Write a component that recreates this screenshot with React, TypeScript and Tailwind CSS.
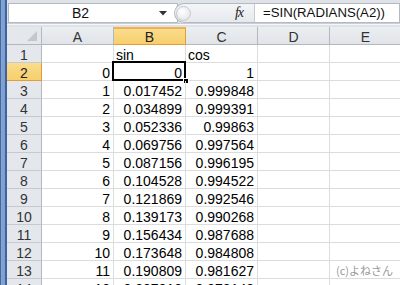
import React from "react";

const sinVals = ["0", "0.017452", "0.034899", "0.052336", "0.069756", "0.087156", "0.104528", "0.121869", "0.139173", "0.156434", "0.173648", "0.190809", "0.207912"];
const cosVals = ["1", "0.999848", "0.999391", "0.99863", "0.997564", "0.996195", "0.994522", "0.992546", "0.990268", "0.987688", "0.984808", "0.981627", "0.978148"];

type Row = { n: number; a: string; b: string; c: string; bLeft?: boolean };

const rows: Row[] = [
  { n: 1, a: "", b: "sin", c: "cos", bLeft: true },
  ...sinVals.map((s, i) => ({ n: i + 2, a: String(i), b: s, c: cosVals[i] })),
];

const cellBase =
  "shrink-0 w-[72px] h-[18px] border-b border-r border-[#dadcdd] flex items-end leading-[14px] overflow-hidden whitespace-nowrap";

export default function App() {
  return (
    <div
      className="w-[400px] h-[285px] overflow-hidden flex bg-white text-[14px] text-black"
      style={{ fontFamily: '"Liberation Sans", Arial, sans-serif' }}
    >
      {/* window frame strip */}
      <div className="w-[7px] shrink-0 bg-[linear-gradient(to_right,#48679c_0px,#48679c_1px,#83a5d7_1px,#7a9ed2_5px,#3f63a1_5px,#3f63a1_7px)]" />

      <div className="flex flex-col min-w-0 flex-1">
        {/* formula bar */}
        <div className="h-[27px] shrink-0 flex flex-col bg-[#dfe3e8]">
          <div className="h-[23px] flex items-start pt-[3px]">
            <div className="ml-[1px] w-[170px] h-[20px] shrink-0 bg-white border border-[#b3bac3] flex items-center">
              <div className="flex-1 text-center leading-[18px] pr-[3px] text-[#111]">B2</div>
              <div className="w-[22px] flex justify-center pr-[6px]">
                <svg width="8" height="5" viewBox="0 0 8 5">
                  <polygon points="0,0 8,0 4,4.5" fill="#333" />
                </svg>
              </div>
            </div>
            <div className="-ml-[4px] relative h-[20px] w-[80px] shrink-0 rounded-l-[10px] border border-r-0 border-[#b3bac3] bg-[linear-gradient(to_bottom,#f4f5f7,#e6e9ed)] flex items-center">
              <div className="ml-[1px] w-[15px] h-[15px] rounded-full border border-[#c4c9cf] bg-[radial-gradient(circle_at_40%_35%,#ffffff,#dde0e4)]" />
              <div className="ml-auto mr-[11px] flex items-center">
                <span
                  className="italic text-[14px] leading-[14px] text-[#222] tracking-[-1px]"
                  style={{ fontFamily: '"Liberation Serif", "Times New Roman", serif' }}
                >
                  fx
                </span>
              </div>
            </div>
            <div className="flex-1 h-[20px] bg-white border border-l-[#c6cbd1] border-[#b3bac3] flex items-center pl-[8px] leading-[18px] text-[#111] whitespace-nowrap overflow-hidden text-[13.2px]">
              =SIN(RADIANS(A2))
            </div>
          </div>
          <div className="h-[1px] bg-[#c9ced5]" />
          <div className="h-[1px] bg-[#f6f7f8]" />
          <div className="h-[2px] bg-[#dfe3e8]" />
        </div>

        {/* column headers */}
        <div className="flex h-[18px] shrink-0">
          <div className="shrink-0 w-[35px] h-[18px] bg-[#e4e7eb] border-b border-r border-[#b1b8c0] relative">
            <svg className="absolute right-[4px] bottom-[3px]" width="10" height="10" viewBox="0 0 10 10">
              <polygon points="10,0 10,10 0,10" fill="#c3c8ce" />
            </svg>
          </div>
          {["A", "B", "C", "D", "E"].map((l) => (
            <div
              key={l}
              className={
                l === "B"
                  ? "shrink-0 w-[72px] h-[18px] border-b border-r border-[#e39c37] border-t-[2px] border-t-[#f2b24b] bg-[linear-gradient(to_bottom,#f9dc8e,#f7cf6c)] flex items-end justify-center leading-[14px] text-[#222]"
                  : "shrink-0 w-[72px] h-[18px] border-b border-r border-[#b1b8c0] bg-[linear-gradient(to_bottom,#eceff2,#e0e3e7)] flex items-end justify-center leading-[14px] text-[#333]"
              }
            >
              {l}
            </div>
          ))}
        </div>

        {/* rows */}
        {rows.map((r) => (
          <div key={r.n} className="flex h-[18px] shrink-0">
            <div
              className={
                r.n === 2
                  ? "shrink-0 w-[35px] h-[18px] border-b border-r border-[#e39c37] bg-[linear-gradient(to_bottom,#f9dc8e,#f7cf6c)] flex items-end justify-center leading-[14px] text-[#222]"
                  : "shrink-0 w-[35px] h-[18px] border-b border-[#c5cad0] border-r border-r-[#b1b8c0] bg-[#e4e7eb] flex items-end justify-center leading-[14px] text-[#333]"
              }
            >
              {r.n}
            </div>
            <div className={cellBase + " justify-end pr-[3px]"}>{r.a}</div>
            <div className={cellBase + (r.bLeft ? " justify-start pl-[2px]" : " justify-end pr-[3px]") + " relative overflow-visible"}>
              {r.b}
              {r.n === 2 && (
                <div className="absolute left-[-2px] top-[-2px] w-[74px] h-[20px] border-[2.5px] border-black pointer-events-none">
                  <div className="absolute right-[-5px] bottom-[-5px] w-[6px] h-[6px] bg-black border border-white" />
                </div>
              )}
            </div>
            <div className={cellBase + (r.bLeft ? " justify-start pl-[2px]" : " justify-end pr-[3px]")}>{r.c}</div>
            <div className={cellBase} />
            <div className={cellBase + " pl-[6px]"}>
              {r.n === 13 && (
                <span
                  className="text-[11px] leading-[14px] text-[#9a9a9a] pb-[1px]"
                  style={{ fontFamily: '"Noto Sans CJK JP", sans-serif' }}
                >
                  (c)よねさん
                </span>
              )}
            </div>
          </div>
        ))}
      </div>
    </div>
  );
}
